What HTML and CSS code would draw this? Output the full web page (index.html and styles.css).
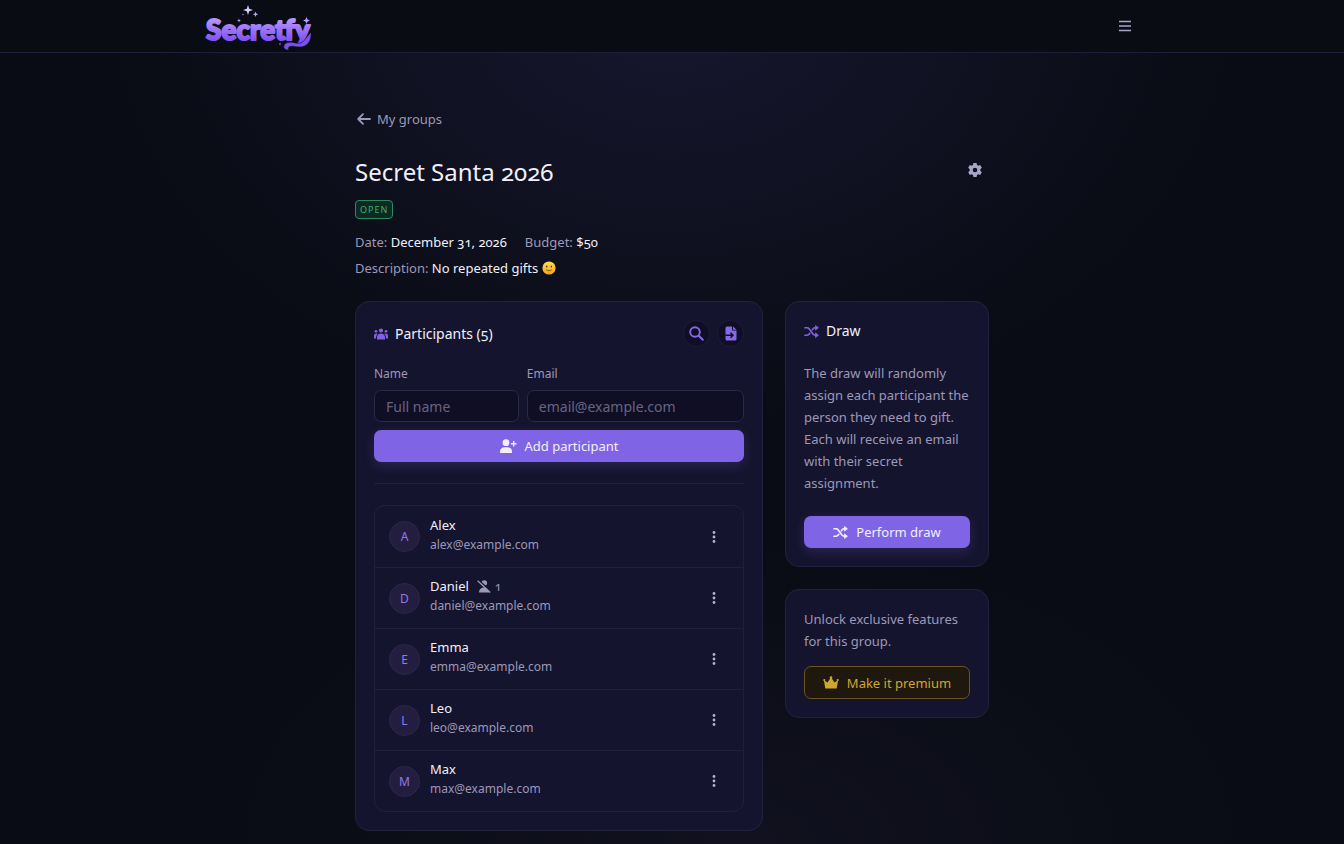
FILE: index.html
```html
<!DOCTYPE html>
<html lang="en">
<head>
  <meta charset="UTF-8">
  <meta name="viewport" content="width=device-width, initial-scale=1">
  <title>Secret Santa 2026 - Secretfy</title>
  <link rel="stylesheet" href="styles.css">
</head>
<body>

<!-- shared icons -->
<svg class="sprite" aria-hidden="true">
  <symbol id="shuffle" viewBox="0 0 16 14">
    <path d="M1 3h2.2c1 0 1.8.4 2.4 1.2l4 5.6c.6.8 1.4 1.2 2.4 1.2h1M1 11h2.2c1 0 1.8-.4 2.4-1.2l.6-.8M9 5l.6-.8C10.2 3.4 11 3 12 3h1" fill="none" stroke="currentColor" stroke-width="1.8" stroke-linecap="round"/>
    <path d="M12.3.5 15.5 3l-3.2 2.5zM12.3 8.5 15.5 11l-3.2 2.5z" fill="currentColor" stroke="currentColor" stroke-width=".8" stroke-linejoin="round"/>
  </symbol>
  <symbol id="dots" viewBox="0 0 4 14">
    <circle cx="2" cy="2.5" r="1.4"/><circle cx="2" cy="7" r="1.4"/><circle cx="2" cy="11.5" r="1.4"/>
  </symbol>
</svg>

<header class="site-header">
  <div class="header-inner">
    <a href="#" class="logo" aria-label="Secretfy">
      <svg width="112" height="50" viewBox="0 0 112 50">
        <defs>
          <linearGradient id="logoFill" x1="0" y1="0" x2="0" y2="1">
            <stop offset="0.2" stop-color="#b796fb"/>
            <stop offset="0.9" stop-color="#7a4cf0"/>
          </linearGradient>
        </defs>
        <text x="3" y="39" class="logo-text" fill="url(#logoFill)" stroke="url(#logoFill)">Secretfy</text>
        <path d="M108 31c1 9-4 15-11 15-5 0-7-1.500-10-.5-2 .7-2 2-1 3.500-4 0-6-2-5-4.500 1-3 5-4 9-3 5 1.500 9 1 11-2z" fill="#7d50ee" stroke="#0a0b18" stroke-width=".6"/>
        <path d="M45 4l1.200 3.800L50 9l-3.800 1.200L45 14l-1.200-3.800L40 9l3.800-1.200z" fill="#d9ccff"/>
        <path d="M52.500 10.500l.8 2 2 .8-2 .8-.8 2-.8-2-2-.8 2-.8zM103.500 16l1 2.500 2.500 1-2.500 1-1 2.500-1-2.500-2.500-1 2.500-1zM36 17.500l.6 1.400 1.400.6-1.400.6-.6 1.400-.6-1.400-1.400-.6 1.400-.6z" fill="#b9a5f5"/>
        <circle cx="40" cy="13.500" r=".7" fill="#a68cf0"/>
        <circle cx="77" cy="43" r="1" fill="#7443e8"/>
      </svg>
    </a>
    <button type="button" class="menu-btn" aria-label="Menu">
      <svg width="12" height="12" viewBox="0 0 12 12"><path d="M0 1.500h12M0 6h12M0 10.500h12" stroke="currentColor" stroke-width="1.600"/></svg>
    </button>
  </div>
</header>

<main class="page">
  <a href="#" class="back-link">
    <svg width="14" height="12" viewBox="0 0 14 12"><path d="M13 6H1.500M6 1.200 1.200 6 6 10.800" fill="none" stroke="currentColor" stroke-width="1.800" stroke-linecap="round" stroke-linejoin="round"/></svg>
    My groups
  </a>

  <div class="title-row">
    <h1>Secret Santa 2026</h1>
    <button type="button" class="settings-btn" aria-label="Group settings">
      <svg width="14" height="14" viewBox="0 0 14 14"><path fill="currentColor" fill-rule="evenodd" d="M5.400 0h3.200l.4 2 1.200.7 2-.7 1.600 2.800L12.300 6.200v1.600l1.500 1.400-1.600 2.800-2-.7L9 12l-.4 2H5.400L5 12l-1.200-.7-2 .7L.2 9.200l1.500-1.400V6.200L.2 4.800 1.800 2l2 .7L5 2zM7 4.700a2.300 2.300 0 1 0 0 4.600 2.300 2.300 0 0 0 0-4.600z"/></svg>
    </button>
  </div>
  <span class="badge">OPEN</span>

  <div class="details">
    <p><span class="detail">Date: <strong>December 31, 2026</strong></span><span class="detail">Budget: <strong>$50</strong></span></p>
    <p>Description: <strong>No repeated gifts</strong>
      <svg class="smile" role="img" aria-label="Smile" width="14" height="14" viewBox="0 0 14 14">
        <defs><linearGradient id="face" x1="0" y1="0" x2="0" y2="1"><stop offset="0" stop-color="#ffe04f"/><stop offset="1" stop-color="#f6a21d"/></linearGradient></defs>
        <circle cx="7" cy="7" r="6.600" fill="url(#face)"/>
        <ellipse cx="4.700" cy="5.500" rx=".8" ry="1.100" fill="#65401a"/><ellipse cx="9.300" cy="5.500" rx=".8" ry="1.100" fill="#65401a"/>
        <path d="M4.500 9c1.400 1 3.600 1 5 0" fill="none" stroke="#65401a" stroke-width=".8" stroke-linecap="round"/>
      </svg>
    </p>
  </div>

  <div class="columns">
    <section class="card">
      <div class="card-head">
        <h2>
          <svg width="14" height="12" viewBox="0 0 14 12" fill="currentColor"><circle cx="7" cy="2.500" r="2.100"/><circle cx="2" cy="3.300" r="1.400"/><circle cx="12" cy="3.300" r="1.400"/><path d="M3 11.500V9.300C3 7 4.600 5.500 7 5.500S11 7 11 9.300v2.200zM0 10.500V7.800C0 6.300 1 5.500 2.600 5.600c.4 0 .7.100 1 .3C2.500 6.900 2 8 2 10.500zM14 10.500V7.800c0-1.500-1-2.300-2.600-2.200-.4 0-.7.100-1 .3C11.500 6.900 12 8 12 10.500z"/></svg>
          Participants (5)
        </h2>
        <div class="card-actions">
          <button type="button" class="round-btn" aria-label="Search">
            <svg width="15" height="15" viewBox="0 0 15 15"><circle cx="6" cy="6" r="4.800" fill="none" stroke="currentColor" stroke-width="1.900"/><path d="M9.800 9.800 13.800 13.800" stroke="currentColor" stroke-width="2" stroke-linecap="round"/></svg>
          </button>
          <button type="button" class="round-btn" aria-label="Import file">
            <svg width="12" height="15" viewBox="0 0 12 15"><path d="M2 .5h5V4.500h4.500V13a1.500 1.500 0 0 1-1.500 1.500H2A1.500 1.500 0 0 1 .5 13V2A1.500 1.500 0 0 1 2 .5zM8 .5l3.500 3.200H8z" fill="currentColor"/><path d="M.3 9.300h7M5.500 6.800 8 9.300l-2.500 2.500" fill="none" stroke="#100e24" stroke-width="1.400"/></svg>
          </button>
        </div>
      </div>

      <form class="add-form">
        <div class="field">
          <label for="name">Name</label>
          <input type="text" id="name" name="name" placeholder="Full name">
        </div>
        <div class="field">
          <label for="email">Email</label>
          <input type="email" id="email" name="email" placeholder="email@example.com">
        </div>
        <button type="button" class="btn">
          <svg width="17" height="14" viewBox="0 0 17 14" fill="currentColor"><circle cx="6" cy="3.700" r="3.400"/><path d="M0 14v-1.500C0 9.800 2 8.200 4.500 8.200h3c2.500 0 4.500 1.600 4.500 4.300V14z"/><path d="M13.700 2v5.400M11 4.700h5.400" stroke="currentColor" stroke-width="1.400"/></svg>
          Add participant
        </button>
      </form>

      <ul class="people">
        <li>
          <span class="avatar">A</span>
          <div class="person"><div class="person-name">Alex</div><div class="person-email">alex@example.com</div></div>
          <button type="button" class="more-btn" aria-label="Options for Alex"><svg width="4" height="14"><use href="#dots"/></svg></button>
        </li>
        <li>
          <span class="avatar">D</span>
          <div class="person">
            <div class="person-name">Daniel
              <span class="excluded">
                <svg width="14" height="13" viewBox="0 0 14 13"><circle cx="7.300" cy="3" r="2.800" fill="currentColor"/><path d="M2 12.500c0-3 2-5 5.200-5S12 9.500 12 12.500z" fill="currentColor"/><path d="M1.500.2 14 11.300" stroke="#15142e" stroke-width="1.500"/><path d="M.6.8 13.200 12.400" stroke="currentColor" stroke-width="1.300"/></svg>
                1
              </span>
            </div>
            <div class="person-email">daniel@example.com</div>
          </div>
          <button type="button" class="more-btn" aria-label="Options for Daniel"><svg width="4" height="14"><use href="#dots"/></svg></button>
        </li>
        <li>
          <span class="avatar">E</span>
          <div class="person"><div class="person-name">Emma</div><div class="person-email">emma@example.com</div></div>
          <button type="button" class="more-btn" aria-label="Options for Emma"><svg width="4" height="14"><use href="#dots"/></svg></button>
        </li>
        <li>
          <span class="avatar">L</span>
          <div class="person"><div class="person-name">Leo</div><div class="person-email">leo@example.com</div></div>
          <button type="button" class="more-btn" aria-label="Options for Leo"><svg width="4" height="14"><use href="#dots"/></svg></button>
        </li>
        <li>
          <span class="avatar">M</span>
          <div class="person"><div class="person-name">Max</div><div class="person-email">max@example.com</div></div>
          <button type="button" class="more-btn" aria-label="Options for Max"><svg width="4" height="14"><use href="#dots"/></svg></button>
        </li>
      </ul>
    </section>

    <aside class="side">
      <section class="card">
        <h2><svg width="15" height="13"><use href="#shuffle"/></svg> Draw</h2>
        <p class="draw-text">The draw will randomly assign each participant the person they need to gift. Each will receive an email with their secret assignment.</p>
        <button type="button" class="btn"><svg width="15" height="13"><use href="#shuffle"/></svg> Perform draw</button>
      </section>
      <section class="card">
        <p class="premium-text">Unlock exclusive features for this group.</p>
        <button type="button" class="btn btn-premium">
          <svg width="16" height="13" viewBox="0 0 16 13" fill="currentColor"><path d="M2.300 12.500.9 4.200l3.700 2.400L8 1l3.400 5.600 3.700-2.400-1.400 8.300z"/><circle cx="8" cy="1.500" r="1.300"/><circle cx="1.300" cy="4" r="1.100"/><circle cx="14.700" cy="4" r="1.100"/></svg>
          Make it premium
        </button>
      </section>
    </aside>
  </div>
</main>

</body>
</html>
```

FILE: styles.css
```css
* {
  box-sizing: border-box;
}
body {
  margin: 0;
  min-height: 100vh;
  background:
    radial-gradient(ellipse 560px 420px at 50% 0, #17172f, transparent),
    radial-gradient(ellipse 500px 300px at 55% 100%, #11111f, transparent),
    #090c14;
  color: #9c98b8;
  font-family: "Noto Sans", "Open Sans", sans-serif;
  font-size: 13px;
  line-height: 22px;
  font-variant-numeric: oldstyle-nums;
}
h1, h2, p, ul {
  margin: 0;
  padding: 0;
}
h1, h2, strong {
  color: #f1effa;
  font-weight: 400;
}
svg {
  flex: none;
}
button, input {
  font: inherit;
}
button {
  cursor: pointer;
}
.sprite {
  display: none;
}

/* header */
.site-header {
  background: #0a0c14;
  border-bottom: 1px solid #211f38;
}
.header-inner {
  max-width: 974px;
  height: 52px;
  margin: 0 auto;
  padding: 0 20px 0 18px;
  display: flex;
  align-items: center;
  justify-content: space-between;
}
.logo {
  height: 50px;
}
.logo-text {
  font-family: Lato, sans-serif;
  font-size: 28px;
  font-weight: 900;
  stroke-width: 2px;
  stroke-linejoin: round;
}
.menu-btn,
.settings-btn,
.more-btn {
  display: flex;
  align-items: center;
  justify-content: center;
  padding: 0;
  border: none;
  background: none;
  color: #aaa5c8;
}
.menu-btn {
  width: 28px;
  height: 28px;
}

/* group info */
.page {
  max-width: 666px;
  margin: 0 auto;
  padding: 55px 16px 14px;
}
.back-link {
  display: inline-flex;
  align-items: center;
  gap: 6px;
  padding-left: 2px;
  color: #9c98b8;
  text-decoration: none;
}
.title-row {
  display: flex;
  justify-content: space-between;
  margin-top: 25px;
}
h1 {
  font-size: 24px;
  line-height: 32px;
}
.settings-btn {
  width: 28px;
  height: 28px;
}
.badge {
  display: block;
  width: fit-content;
  margin-top: 12px;
  padding: 0 4px;
  border: 1px solid #2f8a5b;
  border-radius: 4px;
  background: #0c2a24;
  color: #3fae6c;
  font-size: 9px;
  line-height: 17px;
  letter-spacing: 1px;
}
.details {
  margin-top: 10px;
  line-height: 26px;
}
.detail {
  margin-right: 18px;
}
.smile {
  vertical-align: -2px;
}

/* cards */
.columns {
  display: grid;
  grid-template-columns: 2fr 1fr;
  gap: 22px;
  align-items: start;
  margin-top: 20px;
}
.side {
  display: grid;
  gap: 22px;
}
.card {
  padding: 18px;
  border: 1px solid #24213f;
  border-radius: 14px;
  background: #15142e;
}
h2 {
  display: flex;
  align-items: center;
  gap: 7px;
  font-size: 14px;
  line-height: 22px;
}
h2 svg {
  color: #7f62e3;
}
.card-head {
  display: flex;
  align-items: center;
  justify-content: space-between;
}
.card-actions {
  display: flex;
  gap: 7px;
}
.round-btn {
  display: flex;
  align-items: center;
  justify-content: center;
  width: 27px;
  height: 27px;
  padding: 0;
  border: 1px solid #1e1b38;
  border-radius: 50%;
  background: #100e24;
  color: #8668ea;
}

/* add form */
.add-form {
  display: grid;
  grid-template-columns: 2fr 3fr;
  gap: 8px;
  margin-top: 16px;
  padding-bottom: 21px;
  border-bottom: 1px solid #211f3b;
}
label {
  display: block;
  margin-bottom: 5px;
  font-size: 12px;
}
input {
  display: block;
  width: 100%;
  height: 32px;
  padding: 0 11px;
  border: 1px solid #2b2944;
  border-radius: 7px;
  background: #0f0e24;
  color: #f1effa;
  font-size: 14px;
}
input::placeholder {
  color: #676482;
}
.btn {
  display: flex;
  align-items: center;
  justify-content: center;
  gap: 8px;
  width: 100%;
  height: 32px;
  border: none;
  border-radius: 7px;
  background: #8064e6;
  box-shadow: 0 4px 12px rgba(128, 100, 230, 0.2);
  color: #f1effa;
}
.add-form .btn {
  grid-column: 1 / -1;
}

/* participants */
.people {
  margin-top: 21px;
  border: 1px solid #211f3b;
  border-radius: 11px;
  list-style: none;
}
.people li {
  display: flex;
  align-items: center;
  gap: 10px;
  min-height: 61px;
  padding: 0 14px;
}
.people li + li {
  border-top: 1px solid #211f3b;
}
.avatar {
  width: 31px;
  height: 31px;
  border: 1px solid #2d2649;
  border-radius: 50%;
  background: #231d40;
  color: #9478e8;
  font-size: 12px;
  line-height: 29px;
  text-align: center;
}
.person {
  flex: 1;
  padding-bottom: 4px;
  line-height: 19px;
}
.person-name {
  display: flex;
  align-items: center;
  gap: 8px;
  color: #f1effa;
}
.person-email {
  font-size: 12px;
}
.excluded {
  display: flex;
  align-items: center;
  gap: 4px;
  color: #9c98b8;
  font-size: 12px;
}
.more-btn {
  width: 30px;
  height: 30px;
}
.more-btn svg {
  fill: #b6b1cf;
}

/* side column */
.draw-text {
  margin: 20px 0 22px;
}
.premium-text {
  margin-bottom: 14px;
}
.btn-premium {
  height: 33px;
  border: 1px solid #6b5420;
  background: #1f180f;
  box-shadow: none;
  color: #cfa62f;
}
```
